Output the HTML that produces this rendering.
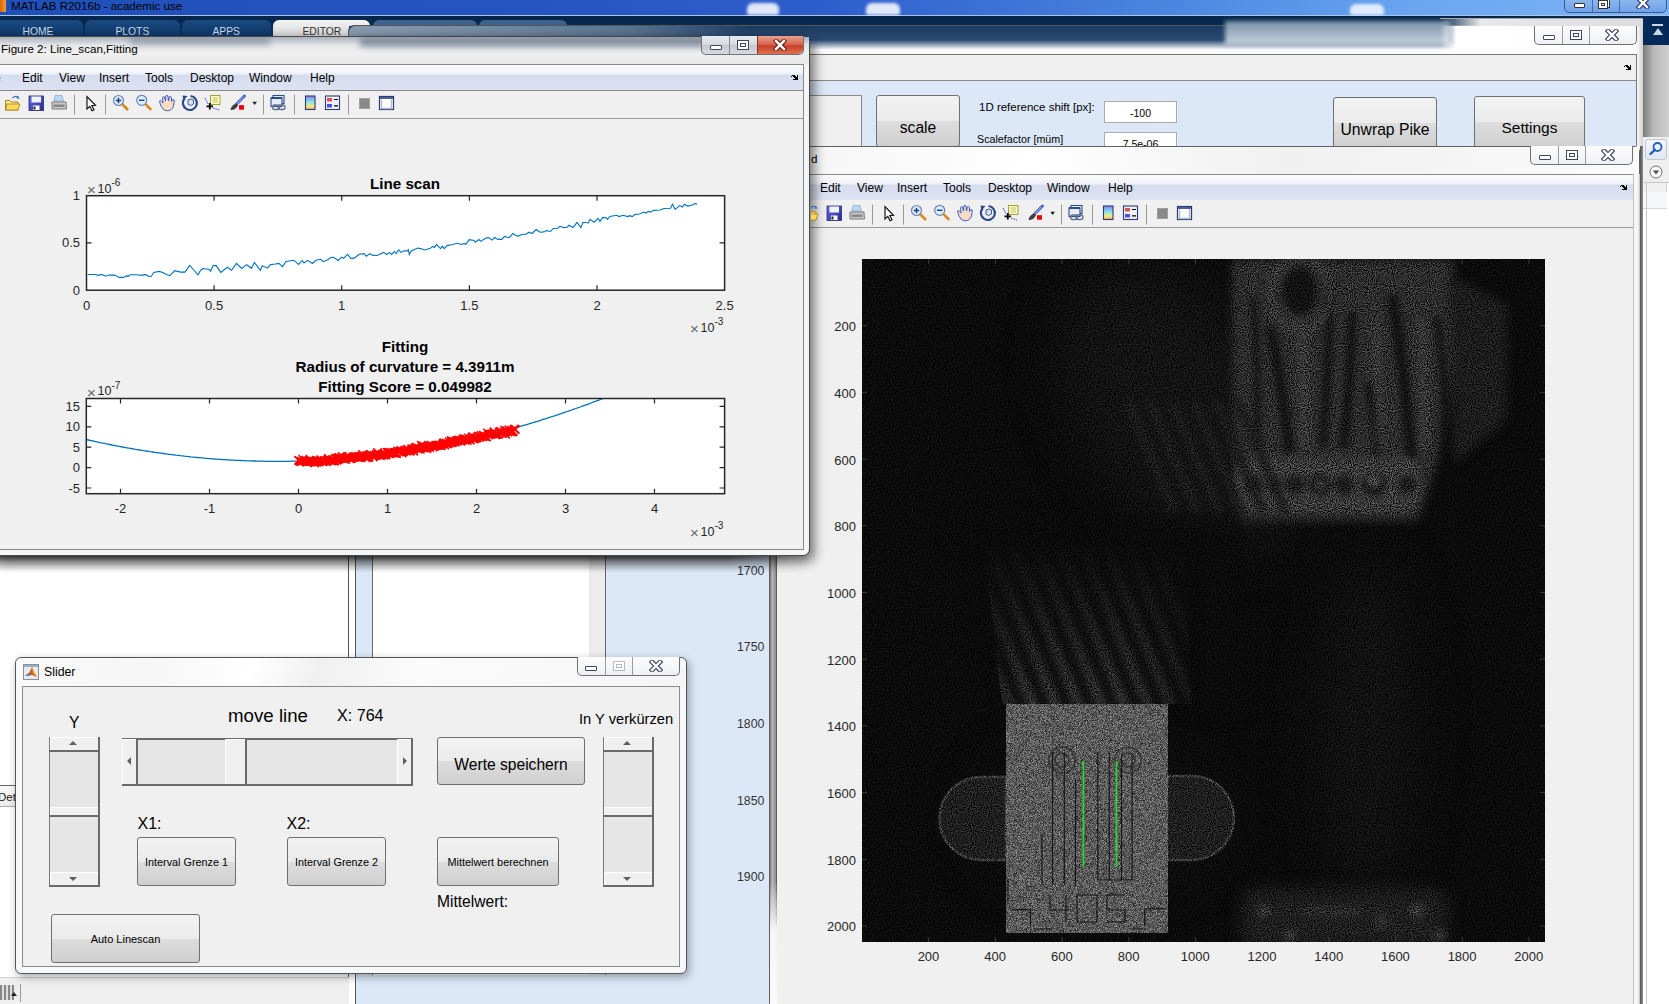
<!DOCTYPE html>
<html><head><meta charset="utf-8"><style>
*{margin:0;padding:0;box-sizing:border-box}
html,body{width:1669px;height:1004px;overflow:hidden;background:#f0f0f0;font-family:"Liberation Sans",sans-serif;color:#000}
.a{position:absolute}
.t{position:absolute;white-space:nowrap;line-height:1}
.btn{position:absolute;border:1px solid #707070;border-radius:3px;background:linear-gradient(#f2f2f2 0%,#ebebeb 50%,#dddddd 51%,#cfcfcf 100%);text-align:center;white-space:nowrap;color:#000}
.ctl{position:absolute;border:1px solid #707070;border-top:none;border-radius:0 0 5px 5px;}
.mb{position:absolute;background:linear-gradient(#fbfcfe 0%,#eef1f8 36%,#d6ddef 40%,#dce2f2 100%);border-top:1px solid #888;border-bottom:1px solid #888}
.mi{position:absolute;top:7px;font-size:12px;white-space:nowrap;line-height:1}
.tb{position:absolute;background:#f0f0f0;border-bottom:1px solid #999}
.tk{position:absolute;font-size:13px;color:#262626;white-space:nowrap;line-height:1}
.sl{position:absolute;background:#e6e6e6}
.ar{position:absolute;background:#f0f0f0;border-top:1px solid #fff;border-left:1px solid #fff}

</style></head><body>
<!-- MATLAB main title bar -->
<div class="a" style="left:0;top:0;width:1669px;height:16px;background:linear-gradient(90deg,#1f4fb8 0%,#2554c0 30%,#2f5fcc 50%,#4a86e0 70%,#6aa6f0 85%,#7db4f5 100%)"></div>
<div class="a" style="left:0;top:15px;width:1669px;height:1px;background:#a9c4ea"></div>
<div class="a" style="left:747px;top:3px;width:32px;height:12px;border-radius:6px 6px 2px 2px;background:rgba(255,255,255,.85);filter:blur(1.5px)"></div>
<div class="a" style="left:866px;top:3px;width:34px;height:12px;border-radius:6px 6px 2px 2px;background:rgba(255,255,255,.85);filter:blur(1.5px)"></div>
<div class="a" style="left:1350px;top:4px;width:34px;height:11px;border-radius:6px 6px 2px 2px;background:rgba(255,255,255,.8);filter:blur(1.5px)"></div>
<div class="t" style="left:11px;top:0px;font-size:11.6px;color:#000">MATLAB R2016b - academic use</div>
<div class="a" style="left:0;top:0;width:6px;height:12px;background:linear-gradient(90deg,#e06010,#f0a030)"></div>
<!-- main window controls -->
<div class="a" style="left:1564px;top:-2px;width:103px;height:15px;border:1px solid #3a5a90;border-radius:0 0 5px 5px;background:linear-gradient(#8cb8f0,#70a0e8)"></div>
<div class="a" style="left:1592px;top:0;width:1px;height:12px;background:#4a6aa0"></div>
<div class="a" style="left:1619px;top:0;width:1px;height:12px;background:#4a6aa0"></div>
<div class="a" style="left:1574px;top:3px;width:11px;height:5px;background:#fff;border:1px solid #333;border-radius:1px"></div>
<div class="a" style="left:1600px;top:-2px;width:10px;height:10px;background:#fff;border:1px solid #333"></div><div class="a" style="left:1598px;top:0px;width:10px;height:9px;background:#fff;border:1px solid #333"><div class="a" style="left:2px;top:2px;width:4px;height:3px;border:1px solid #333"></div></div>
<svg class="a" style="left:1636px;top:-3px" width="14" height="12" viewBox="0 0 14 12"><path d="M3 2 L11 10 M11 2 L3 10" stroke="#2a3a60" stroke-width="4.6" stroke-linecap="square" fill="none"/><path d="M3 2 L11 10 M11 2 L3 10" stroke="#fff" stroke-width="2.4" stroke-linecap="square" fill="none"/></svg>
<!-- toolstrip tabs -->
<div class="a" style="left:0;top:16px;width:1669px;height:20px;background:linear-gradient(#062447,#0a3263)"></div>
<div class="a" style="left:1643px;top:16px;width:26px;height:29px;background:#042a5a"></div>
<div class="a" style="left:0;top:20px;width:83px;height:16px;background:linear-gradient(#1a4a80,#0e3868);border-radius:0 6px 0 0"></div>
<div class="a" style="left:85px;top:20px;width:95px;height:16px;background:linear-gradient(#1a4a80,#0e3868);border-radius:6px 6px 0 0"></div>
<div class="a" style="left:182px;top:20px;width:89px;height:16px;background:linear-gradient(#1a4a80,#0e3868);border-radius:6px 6px 0 0"></div>
<div class="a" style="left:273px;top:20px;width:97px;height:16px;background:linear-gradient(#f4f4f4,#d8d8d8);border-radius:6px 6px 0 0"></div>
<div class="a" style="left:373px;top:20px;width:104px;height:16px;background:#3e6290;border-radius:6px 6px 0 0"></div>
<div class="a" style="left:479px;top:20px;width:88px;height:16px;background:#3e6290;border-radius:6px 6px 0 0"></div>
<div class="t" style="left:22.5px;top:27px;font-size:10.3px;color:#d0dcea">HOME</div>
<div class="t" style="left:115.5px;top:27px;font-size:10.3px;color:#d0dcea">PLOTS</div>
<div class="t" style="left:212.5px;top:27px;font-size:10.3px;color:#d0dcea">APPS</div>
<div class="t" style="left:302.5px;top:27px;font-size:10.3px;color:#333">EDITOR</div>
<!-- right side collapse icon -->
<div class="a" style="left:1652px;top:24px;width:11px;height:2px;background:#c8d8e8"></div>
<div class="a" style="left:1653px;top:28px;width:0;height:0;border-left:5px solid transparent;border-right:5px solid transparent;border-bottom:7px solid #c8d8e8"></div>
<!-- right panel -->
<div class="a" style="left:1643px;top:45px;width:26px;height:959px;background:#f0f0f0"></div>
<div class="a" style="left:1643px;top:45px;width:26px;height:92px;background:linear-gradient(90deg,#7a7a7a,#b8b8b8 40%,#d0d0d0)"></div>
<div class="a" style="left:1645px;top:139px;width:22px;height:21px;border:1px solid #c0c8d4;border-radius:3px;background:linear-gradient(#f4f6fa,#e2e8f0)"></div>
<svg class="a" style="left:1648px;top:141px" width="16" height="16" viewBox="0 0 16 16"><circle cx="9.5" cy="6" r="4" fill="#e8f4ff" stroke="#2060c0" stroke-width="1.8"/><path d="M6.8 8.8 L2.5 13" stroke="#2060c0" stroke-width="2.4" stroke-linecap="round"/></svg>
<svg class="a" style="left:1649px;top:165px" width="14" height="14" viewBox="0 0 14 14"><circle cx="7" cy="7" r="6" fill="#f8f8f8" stroke="#707070" stroke-width="1"/><path d="M3.8 5.5 H10.2 L7 9.5Z" fill="#505050"/></svg>
<div class="a" style="left:1643px;top:182px;width:26px;height:1px;background:#c8c8c8"></div>
<div class="a" style="left:1643px;top:183px;width:26px;height:821px;background:#fff"></div>
<div class="a" style="left:1643px;top:183px;width:24px;height:26px;background:#f0f0f0;border-right:1px solid #d0d0d0;border-bottom:1px solid #d8d8d8"></div>
<div class="a" style="left:1643px;top:192px;width:24px;height:16px;background:#f4f6fa"></div>
<div class="a" style="left:1646px;top:183px;width:1px;height:821px;background:#c8c8c8"></div>
<!-- MATLAB editor area background -->
<div class="a" style="left:0;top:556px;width:771px;height:448px;background:#dce8f8"></div><div class="a" style="left:0;top:556px;width:349px;height:448px;background:#fff"></div><div class="a" style="left:349px;top:556px;width:7px;height:448px;background:#fff"></div><div class="a" style="left:373px;top:556px;width:216px;height:419px;background:#fff"></div>
<div class="a" style="left:348px;top:556px;width:1px;height:421px;background:#555"></div>
<div class="a" style="left:355px;top:556px;width:1px;height:448px;background:#555"></div>

<div class="a" style="left:372px;top:556px;width:1px;height:419px;background:#666"></div>
<div class="a" style="left:589px;top:556px;width:16px;height:419px;background:#ececec"></div>
<div class="a" style="left:605px;top:556px;width:1px;height:419px;background:#666"></div>
<div class="a" style="left:606px;top:556px;width:163px;height:448px;background:#dce8f8"></div>
<div class="t" style="left:737px;top:565px;font-size:12.3px;color:#333">1700</div>
<div class="t" style="left:737px;top:641px;font-size:12.3px;color:#333">1750</div>
<div class="t" style="left:737px;top:718px;font-size:12.3px;color:#333">1800</div>
<div class="t" style="left:737px;top:795px;font-size:12.3px;color:#333">1850</div>
<div class="t" style="left:737px;top:871px;font-size:12.3px;color:#333">1900</div>
<!-- status bar bottom-left -->
<div class="a" style="left:0;top:977px;width:349px;height:27px;background:#efefef;border-top:1px solid #d0d0d0"></div>
<div class="a" style="left:20px;top:984px;width:1px;height:18px;background:#999"></div>

<div class="a" style="left:0;top:785px;width:16px;height:22px;background:linear-gradient(#fafafa,#ececec);border-top:1px solid #666;border-bottom:1px solid #aaa;border-right:1px solid #666"></div><div class="t" style="left:-2px;top:792px;font-size:11.5px;color:#222">Det</div>
<div class="a" style="left:0;top:985px;width:14px;height:15px;background:repeating-linear-gradient(90deg,#888 0 2px,#ddd 2px 4px)"></div><div class="a" style="left:11px;top:992px;width:0;height:0;border-left:3px solid transparent;border-right:3px solid transparent;border-bottom:4px solid #222"></div>
<!-- GUI window top-right -->
<div class="a" style="left:348px;top:25px;width:1295px;height:121px;background:#f6f6f6;border:1px solid #555;border-radius:6px 6px 0 0"></div>
<div class="a" style="left:349px;top:26px;width:1293px;height:28px;background:linear-gradient(#1e3a60 0%,#2a4a74 50%,#ffffff 85%,#fafafa)"></div><div class="a" style="left:349px;top:26px;width:400px;height:10px;border-radius:6px 0 0 0;background:linear-gradient(90deg,#8a9cb0 0%,#7088a0 40%,#5a7490 70%,rgba(30,58,96,0) 100%)"></div><div class="a" style="left:1225px;top:21px;width:225px;height:24px;background:linear-gradient(#7890a8,#a8b8c8 60%,#c8d4e0);filter:blur(2px)"></div><div class="a" style="left:1440px;top:26px;width:202px;height:28px;background:linear-gradient(90deg,rgba(255,255,255,0),#fff 8%,#fdfdfd)"></div><div class="a" style="left:1440px;top:18px;width:203px;height:8px;background:linear-gradient(90deg,rgba(230,230,230,0),#e8e8e8 20%,#dcdcdc);border-top:1px solid #aaa"></div>
<div class="a" style="left:810px;top:54px;width:826px;height:27px;background:#efefef;border-top:1px solid #777;border-bottom:1px solid #888"></div>
<div class="a" style="left:810px;top:81px;width:826px;height:65px;background:#dce8f8"></div>
<div class="a" style="left:1636px;top:54px;width:1px;height:92px;background:#777"></div>
<div class="a" style="left:1637px;top:26px;width:6px;height:120px;background:linear-gradient(90deg,#f8f8f8,#d0d0d0)"></div>
<!-- dock arrow -->
<svg class="a" style="left:1624px;top:65px" width="7" height="5" viewBox="0 0 7 5" shape-rendering="crispEdges"><path d="M1 0h1v1h-1zM2 0h1v1h-1zM3 0h1v1h-1zM6 0h1v1h-1zM0 1h1v1h-1zM2 1h1v1h-1zM3 1h1v1h-1zM4 1h1v1h-1zM6 1h1v1h-1zM3 2h1v1h-1zM4 2h1v1h-1zM5 2h1v1h-1zM6 2h1v1h-1zM4 3h1v1h-1zM5 3h1v1h-1zM6 3h1v1h-1zM2 4h1v1h-1zM3 4h1v1h-1zM4 4h1v1h-1zM5 4h1v1h-1zM6 4h1v1h-1z" fill="#000"/></svg>
<!-- GUI controls -->
<div class="ctl" style="left:1534px;top:26px;width:103px;height:19px;background:linear-gradient(#fdfdfd,#eef0f4)"></div>
<div class="a" style="left:1562px;top:26px;width:1px;height:18px;background:#9a9a9a"></div>
<div class="a" style="left:1589px;top:26px;width:1px;height:18px;background:#9a9a9a"></div>
<div class="a" style="left:1543px;top:35px;width:12px;height:5px;border:1px solid #3c4660;border-radius:1px;background:#fff"></div>
<div class="a" style="left:1570px;top:30px;width:12px;height:10px;border:1px solid #3c4660;background:#fff"><div class="a" style="left:2px;top:2px;width:6px;height:4px;border:1px solid #3c4660"></div></div>
<svg class="a" style="left:1605px;top:29px" width="14" height="12" viewBox="0 0 14 12"><path d="M3 2 L11 10 M11 2 L3 10" stroke="#3c4660" stroke-width="4.6" stroke-linecap="square" fill="none"/><path d="M3 2 L11 10 M11 2 L3 10" stroke="#fff" stroke-width="2.4" stroke-linecap="square" fill="none"/></svg>
<!-- left partial button -->
<div class="a" style="left:800px;top:95px;width:62px;height:52px;border:1px solid #8a8a8a;background:#efefef"></div>
<div class="btn" style="left:876px;top:95px;width:84px;height:52px;font-size:15.6px;line-height:1;padding-top:24px">scale</div>
<div class="t" style="left:979px;top:101.5px;font-size:11.5px;color:#000">1D reference shift [px]:</div>
<div class="a" style="left:1104px;top:101px;width:73px;height:22px;background:#fff;border:1px solid #ababab;font-size:10.5px;text-align:center;line-height:1;padding-top:6px">-100</div>
<div class="t" style="left:977px;top:134px;font-size:10.7px;color:#000">Scalefactor [müm]</div>
<div class="a" style="left:1104px;top:132px;width:73px;height:22px;background:#fff;border:1px solid #ababab;font-size:10.5px;text-align:center;line-height:1;padding-top:6px">7.5e-06</div>
<div class="btn" style="left:1333px;top:97px;width:104px;height:52px;font-size:15.7px;line-height:1;padding-top:24px">Unwrap Pike</div>
<div class="btn" style="left:1474px;top:96px;width:111px;height:52px;font-size:15.5px;line-height:1;padding-top:23px">Settings</div>

<!-- Figure 1 window -->
<div class="a" style="left:769px;top:146px;width:871px;height:858px;background:#f6f7f9;border:1px solid #606060;border-radius:6px 6px 0 0"></div>
<div class="a" style="left:770px;top:147px;width:869px;height:27px;background:linear-gradient(90deg,#f4f4f4,#ffffff 30%,#f0f0f0 60%,#fbfbfb)"></div>
<div class="a" style="left:770px;top:174px;width:7px;height:830px;background:linear-gradient(90deg,#707070,#b8b8b8 30%,#909090 80%,#404040)"></div><div class="a" style="left:770px;top:880px;width:7px;height:124px;background:linear-gradient(rgba(250,250,250,0),rgba(250,250,250,.95) 40%,#fafafa)"></div>
<div class="a" style="left:1633px;top:174px;width:7px;height:830px;background:linear-gradient(90deg,#a0a0a0,#f8f8f8 20%,#f4f4f4 70%,#c0c0c0)"></div><div class="a" style="left:1640px;top:146px;width:3px;height:858px;background:linear-gradient(90deg,#505050,#909090)"></div>
<div class="t" style="left:811px;top:153px;font-size:11.6px">d</div>
<div class="ctl" style="left:1530px;top:146px;width:103px;height:19px;background:linear-gradient(#fdfdfd,#eef0f4)"></div>
<div class="a" style="left:1558px;top:146px;width:1px;height:18px;background:#9a9a9a"></div>
<div class="a" style="left:1585px;top:146px;width:1px;height:18px;background:#9a9a9a"></div>
<div class="a" style="left:1539px;top:155px;width:12px;height:5px;border:1px solid #3c4660;border-radius:1px;background:#fff"></div>
<div class="a" style="left:1566px;top:150px;width:12px;height:10px;border:1px solid #3c4660;background:#fff"><div class="a" style="left:2px;top:2px;width:6px;height:4px;border:1px solid #3c4660"></div></div>
<svg class="a" style="left:1601px;top:149px" width="14" height="12" viewBox="0 0 14 12"><path d="M3 2 L11 10 M11 2 L3 10" stroke="#3c4660" stroke-width="4.6" stroke-linecap="square" fill="none"/><path d="M3 2 L11 10 M11 2 L3 10" stroke="#fff" stroke-width="2.4" stroke-linecap="square" fill="none"/></svg>
<div class="mb" style="left:777px;top:174px;width:856px;height:27px"></div>
<div class="mi" style="left:820px;top:182px">Edit</div>
<div class="mi" style="left:857px;top:182px">View</div>
<div class="mi" style="left:897px;top:182px">Insert</div>
<div class="mi" style="left:943px;top:182px">Tools</div>
<div class="mi" style="left:988px;top:182px">Desktop</div>
<div class="mi" style="left:1047px;top:182px">Window</div>
<div class="mi" style="left:1108px;top:182px">Help</div>
<svg class="a" style="left:1620px;top:185px" width="7" height="5" viewBox="0 0 7 5" shape-rendering="crispEdges"><path d="M1 0h1v1h-1zM2 0h1v1h-1zM3 0h1v1h-1zM6 0h1v1h-1zM0 1h1v1h-1zM2 1h1v1h-1zM3 1h1v1h-1zM4 1h1v1h-1zM6 1h1v1h-1zM3 2h1v1h-1zM4 2h1v1h-1zM5 2h1v1h-1zM6 2h1v1h-1zM4 3h1v1h-1zM5 3h1v1h-1zM6 3h1v1h-1zM2 4h1v1h-1zM3 4h1v1h-1zM4 4h1v1h-1zM5 4h1v1h-1zM6 4h1v1h-1z" fill="#000"/></svg>
<div class="tb" style="left:777px;top:200px;width:856px;height:28px"></div>
<div class="a" style="left:777px;top:228px;width:856px;height:776px;background:#f0f0f0"></div>
<!-- image -->
<svg class="a" style="left:862px;top:259px" width="683" height="683" viewBox="0 0 683 683">
<defs>
<filter id="spk" color-interpolation-filters="sRGB" filterUnits="userSpaceOnUse" x="0" y="0" width="683" height="683"><feTurbulence type="fractalNoise" baseFrequency="0.95" numOctaves="1" seed="5" result="n"/><feColorMatrix in="n" values="3.2 0 0 0 -1.1  3.2 0 0 0 -1.1  3.2 0 0 0 -1.1  0 0 0 0 1" result="g"/><feComposite in="SourceGraphic" in2="g" operator="arithmetic" k1="1.75" k2="0.12" k3="0" k4="0"/></filter>
<filter id="spk2" color-interpolation-filters="sRGB" filterUnits="userSpaceOnUse" x="0" y="0" width="683" height="683"><feTurbulence type="fractalNoise" baseFrequency="1.3" numOctaves="1" seed="8" result="n"/><feColorMatrix in="n" values="2.4 0 0 0 -0.7  2.4 0 0 0 -0.7  2.4 0 0 0 -0.7  0 0 0 0 1" result="g"/><feComposite in="SourceGraphic" in2="g" operator="arithmetic" k1="1.3" k2="0.35" k3="0" k4="0"/></filter>
<filter id="b3" color-interpolation-filters="sRGB" filterUnits="userSpaceOnUse" x="0" y="0" width="683" height="683"><feGaussianBlur stdDeviation="3"/></filter>
<filter id="b5" color-interpolation-filters="sRGB" filterUnits="userSpaceOnUse" x="0" y="0" width="683" height="683"><feGaussianBlur stdDeviation="5"/></filter>
<filter id="b8" color-interpolation-filters="sRGB" filterUnits="userSpaceOnUse" x="0" y="0" width="683" height="683"><feGaussianBlur stdDeviation="8"/></filter>
<filter id="b25" color-interpolation-filters="sRGB" filterUnits="userSpaceOnUse" x="0" y="0" width="683" height="683"><feGaussianBlur stdDeviation="25"/></filter>
<clipPath id="imc"><rect width="683" height="683"/></clipPath>
<linearGradient id="frg" x1="0" y1="0" x2="0" y2="1"><stop offset="0" stop-color="#0b0b0b" stop-opacity="1"/><stop offset="0.45" stop-color="#0b0b0b" stop-opacity="0.55"/><stop offset="1" stop-color="#0b0b0b" stop-opacity="0"/></linearGradient>
<linearGradient id="frg2" x1="0" y1="0" x2="1" y2="0"><stop offset="0" stop-color="#0b0b0b" stop-opacity="0.6"/><stop offset="0.25" stop-color="#0b0b0b" stop-opacity="0"/><stop offset="0.7" stop-color="#0b0b0b" stop-opacity="0"/><stop offset="1" stop-color="#0b0b0b" stop-opacity="0.7"/></linearGradient>
<clipPath id="frc"><path d="M122 287 L322 287 L330 445 L140 445Z"/></clipPath>
<clipPath id="trc"><path d="M368 0 L596 0 L592 121 L580 195 L560 258 L376 258 L370 195Z"/></clipPath>
</defs>
<g clip-path="url(#imc)">
<g filter="url(#spk)">
<rect width="683" height="683" fill="#0b0b0b"/>
<g filter="url(#b25)"><ellipse cx="320" cy="150" rx="100" ry="160" fill="#131313" transform="rotate(-35 320 150)"/><ellipse cx="505" cy="470" rx="45" ry="170" fill="#121212"/><ellipse cx="240" cy="560" rx="120" ry="70" fill="#0f0f0f"/></g>
<g filter="url(#b5)"><path d="M370 0 L592 0 L588 121 L576 200 L556 262 L380 262 L372 200Z" fill="#2c2c2c"/><path d="M585 15 L645 45 L645 160 L592 205Z" fill="#1c1c1c"/></g>
<g clip-path="url(#trc)"><g filter="url(#b3)"><path d="M409 72 Q421 131 427 190" stroke="#121212" stroke-width="10" fill="none" stroke-linecap="round"/><path d="M467 30 Q467 108 461 185" stroke="#121212" stroke-width="8" fill="none" stroke-linecap="round"/><path d="M490 57 Q489 121 482 185" stroke="#121212" stroke-width="9" fill="none" stroke-linecap="round"/><path d="M531 41 Q543 118 549 195" stroke="#121212" stroke-width="11" fill="none" stroke-linecap="round"/><path d="M506 127 Q514 161 515 195" stroke="#121212" stroke-width="7" fill="none" stroke-linecap="round"/><path d="M392 40 Q396 110 395 180" stroke="#121212" stroke-width="6" fill="none" stroke-linecap="round"/><path d="M575 60 Q583 115 585 170" stroke="#121212" stroke-width="7" fill="none" stroke-linecap="round"/><path d="M440 60 L443 190" stroke="#444" stroke-width="10" fill="none" opacity="0.5"/><path d="M515 60 L518 190" stroke="#444" stroke-width="8" fill="none" opacity="0.5"/><path d="M560 60 L563 190" stroke="#444" stroke-width="8" fill="none" opacity="0.5"/></g></g>
<g filter="url(#b3)"><ellipse cx="438" cy="35" rx="30" ry="36" fill="none" stroke="#363636" stroke-width="7"/><ellipse cx="438" cy="32" rx="17" ry="24" fill="#121212"/></g>
<g filter="url(#b3)"><rect x="372" y="198" width="188" height="54" rx="20" fill="#383838"/><circle cx="392" cy="226" r="9" fill="#1a1a1a"/><circle cx="412" cy="226" r="7" fill="#1a1a1a"/><circle cx="433" cy="226" r="10" fill="#1a1a1a"/><circle cx="458" cy="226" r="11" fill="#1a1a1a"/><circle cx="482" cy="226" r="10" fill="#1a1a1a"/><circle cx="512" cy="226" r="12" fill="#1a1a1a"/><circle cx="545" cy="226" r="9" fill="#1a1a1a"/></g>
<g filter="url(#b3)"><circle cx="458" cy="226" r="3" fill="#777"/><circle cx="512" cy="222" r="5" fill="#666"/></g>
<g filter="url(#b3)"><path d="M267 145 L312 250" stroke="#1c1c1c" stroke-width="9" stroke-linecap="round"/><path d="M289 145 L334 250" stroke="#1c1c1c" stroke-width="9" stroke-linecap="round"/><path d="M311 145 L356 250" stroke="#1c1c1c" stroke-width="9" stroke-linecap="round"/><path d="M333 145 L378 250" stroke="#1c1c1c" stroke-width="9" stroke-linecap="round"/><path d="M355 145 L400 250" stroke="#1c1c1c" stroke-width="9" stroke-linecap="round"/><path d="M377 145 L422 250" stroke="#1c1c1c" stroke-width="9" stroke-linecap="round"/></g>
<g clip-path="url(#frc)"><g filter="url(#b3)"><rect x="100" y="270" width="260" height="190" fill="#0f0f0f"/><path d="M26 262 L104 452" stroke="#303030" stroke-width="10"/><path d="M49 262 L127 452" stroke="#303030" stroke-width="10"/><path d="M72 262 L150 452" stroke="#303030" stroke-width="10"/><path d="M95 262 L173 452" stroke="#303030" stroke-width="10"/><path d="M118 262 L196 452" stroke="#303030" stroke-width="10"/><path d="M141 262 L219 452" stroke="#303030" stroke-width="10"/><path d="M164 262 L242 452" stroke="#303030" stroke-width="10"/><path d="M187 262 L265 452" stroke="#303030" stroke-width="10"/><path d="M210 262 L288 452" stroke="#303030" stroke-width="10"/><path d="M233 262 L311 452" stroke="#303030" stroke-width="10"/><path d="M256 262 L334 452" stroke="#303030" stroke-width="10"/><path d="M279 262 L357 452" stroke="#303030" stroke-width="10"/><path d="M302 262 L380 452" stroke="#303030" stroke-width="10"/><path d="M325 262 L403 452" stroke="#303030" stroke-width="10"/><path d="M348 262 L426 452" stroke="#303030" stroke-width="10"/></g></g>
<rect x="100" y="280" width="240" height="170" fill="url(#frg)"/><rect x="100" y="280" width="240" height="170" fill="url(#frg2)"/>
<g filter="url(#b8)"><rect x="90" y="262" width="270" height="22" fill="#0b0b0b"/><rect x="330" y="270" width="50" height="185" fill="#0b0b0b"/></g>
<path d="M144 518 L119 518 A41.5 41.5 0 0 0 119 601 L144 601Z" fill="#1e1e1e" stroke="#3a3a3a" stroke-width="2.5"/>
<path d="M305 517 L330 517 A42 42 0 0 1 330 601 L305 601Z" fill="#1e1e1e" stroke="#3a3a3a" stroke-width="2.5"/>
<g filter="url(#b8)"><rect x="380" y="630" width="205" height="60" rx="12" fill="#1e1e1e"/></g>
<g filter="url(#b3)"><circle cx="402" cy="652" r="6" fill="#383838"/><circle cx="428" cy="677" r="6" fill="#383838"/><circle cx="555" cy="652" r="7" fill="#383838"/><circle cx="520" cy="662" r="8" fill="#2e2e2e"/><circle cx="578" cy="677" r="6" fill="#383838"/><rect x="440" y="648" width="60" height="10" fill="#2a2a2a"/></g>
</g>
<rect x="144" y="445" width="162" height="229" fill="#5a5a5a" filter="url(#spk2)"/>
<path d="M180 575V626 M190.6 493V626 M202.3 493V626 M213.5 520V626 M235.8 493V621 M247.3 493V621 M259.5 495V621 M270.1 495V621 M235.8 621H270.1 M188 636 V651 H207 M204 636 V663 M215 636 H235 V663 H215Z M263 636 H245 V651 H263 V663 H245 M150.6 650.6 H168.4 V668.1 M282.7 649.8 H304.7 M282.7 649.8 V667.6 M146 621 V643 M172 670 H190 M270 670 H284" stroke="#080808" stroke-width="1.1" fill="none" opacity="0.85"/>
<g fill="none" stroke="#222" stroke-width="1.4" opacity="0.7"><circle cx="200" cy="501" r="13"/><circle cx="266" cy="501" r="13"/><circle cx="200" cy="501" r="7"/><circle cx="266" cy="501" r="7"/></g>
<path d="M221.4 502 V608 M254.4 502 V608" stroke="#1ee01e" stroke-width="1.6"/>
<path d="M66.7 683V678M66.7 0V5M0 66.7H5M683 66.7H678M133.4 683V678M133.4 0V5M0 133.4H5M683 133.4H678M200.1 683V678M200.1 0V5M0 200.1H5M683 200.1H678M266.8 683V678M266.8 0V5M0 266.8H5M683 266.8H678M333.5 683V678M333.5 0V5M0 333.5H5M683 333.5H678M400.2 683V678M400.2 0V5M0 400.2H5M683 400.2H678M466.9 683V678M466.9 0V5M0 466.9H5M683 466.9H678M533.6 683V678M533.6 0V5M0 533.6H5M683 533.6H678M600.3 683V678M600.3 0V5M0 600.3H5M683 600.3H678M667.0 683V678M667.0 0V5M0 667.0H5M683 667.0H678" stroke="#3a3a3a" stroke-width="1"/>
</g></svg>
<!-- /image -->
<div class="tk" style="left:776px;top:320.1px;width:80px;text-align:right;font-size:13px">200</div>
<div class="tk" style="left:888.5px;top:949.6px;width:80px;text-align:center;font-size:13px">200</div>
<div class="tk" style="left:776px;top:386.8px;width:80px;text-align:right;font-size:13px">400</div>
<div class="tk" style="left:955.2px;top:949.6px;width:80px;text-align:center;font-size:13px">400</div>
<div class="tk" style="left:776px;top:453.5px;width:80px;text-align:right;font-size:13px">600</div>
<div class="tk" style="left:1021.9px;top:949.6px;width:80px;text-align:center;font-size:13px">600</div>
<div class="tk" style="left:776px;top:520.2px;width:80px;text-align:right;font-size:13px">800</div>
<div class="tk" style="left:1088.6px;top:949.6px;width:80px;text-align:center;font-size:13px">800</div>
<div class="tk" style="left:776px;top:586.9px;width:80px;text-align:right;font-size:13px">1000</div>
<div class="tk" style="left:1155.3px;top:949.6px;width:80px;text-align:center;font-size:13px">1000</div>
<div class="tk" style="left:776px;top:653.6px;width:80px;text-align:right;font-size:13px">1200</div>
<div class="tk" style="left:1222.0px;top:949.6px;width:80px;text-align:center;font-size:13px">1200</div>
<div class="tk" style="left:776px;top:720.3px;width:80px;text-align:right;font-size:13px">1400</div>
<div class="tk" style="left:1288.7px;top:949.6px;width:80px;text-align:center;font-size:13px">1400</div>
<div class="tk" style="left:776px;top:787.0px;width:80px;text-align:right;font-size:13px">1600</div>
<div class="tk" style="left:1355.4px;top:949.6px;width:80px;text-align:center;font-size:13px">1600</div>
<div class="tk" style="left:776px;top:853.7px;width:80px;text-align:right;font-size:13px">1800</div>
<div class="tk" style="left:1422.1px;top:949.6px;width:80px;text-align:center;font-size:13px">1800</div>
<div class="tk" style="left:776px;top:920.4px;width:80px;text-align:right;font-size:13px">2000</div>
<div class="tk" style="left:1488.8px;top:949.6px;width:80px;text-align:center;font-size:13px">2000</div>

<!-- Figure 2 window -->
<div class="a" style="left:0;top:556px;width:808px;height:16px;background:linear-gradient(rgba(0,0,0,.6),rgba(0,0,0,.25) 35%,rgba(0,0,0,0));-webkit-mask-image:linear-gradient(90deg,#000 90%,transparent)"></div>
<div class="a" style="left:-8px;top:36px;width:818px;height:520px;background:#f4f5f7;border:1px solid #4a4a4a;border-radius:7px;box-shadow:3px 5px 12px 1px rgba(0,0,0,.55)"></div>
<div class="a" style="left:0;top:37px;width:809px;height:27px;background:linear-gradient(#a8b0ba 0%,#e4e6e9 30%,#f0f0f0 60%,#e8e8e8 100%)"></div>
<div class="a" style="left:130px;top:38px;width:140px;height:7px;background:rgba(40,60,90,.35);filter:blur(3px)"></div>
<div class="a" style="left:360px;top:38px;width:440px;height:9px;background:rgba(30,50,80,.45);filter:blur(3px)"></div>
<div class="t" style="left:1px;top:43px;font-size:11.6px">Figure 2: Line_scan,Fitting</div>
<div class="ctl" style="left:701px;top:36px;width:103px;height:19px;background:linear-gradient(#e8ebef 0%,#d4d8de 50%,#c4c8ce 51%,#d8dce2 100%)"></div>
<div class="a" style="left:757px;top:36px;width:46px;height:18px;border-radius:0 0 5px 0;background:linear-gradient(#e8a090 0%,#d86850 45%,#c8402a 55%,#e07050 100%);border-left:1px solid #8a3020"></div>
<div class="a" style="left:729px;top:36px;width:1px;height:18px;background:#8a8a8a"></div>
<div class="a" style="left:710px;top:45px;width:12px;height:5px;border:1px solid #3c4660;border-radius:1px;background:#fff"></div>
<div class="a" style="left:737px;top:40px;width:12px;height:10px;border:1px solid #3c4660;background:#fff"><div class="a" style="left:2px;top:2px;width:6px;height:4px;border:1px solid #3c4660"></div></div>
<svg class="a" style="left:773px;top:39px" width="14" height="12" viewBox="0 0 14 12"><path d="M3 2 L11 10 M11 2 L3 10" stroke="#6a2a20" stroke-width="4.6" stroke-linecap="square" fill="none"/><path d="M3 2 L11 10 M11 2 L3 10" stroke="#fff" stroke-width="2.4" stroke-linecap="square" fill="none"/></svg>
<div class="mb" style="left:0;top:64px;width:804px;height:27px;border-right:1px solid #888"></div>
<div class="mi" style="left:-6px;top:71.6px">e</div>
<div class="mi" style="left:22px;top:71.6px">Edit</div>
<div class="mi" style="left:59px;top:71.6px">View</div>
<div class="mi" style="left:99px;top:71.6px">Insert</div>
<div class="mi" style="left:145px;top:71.6px">Tools</div>
<div class="mi" style="left:190px;top:71.6px">Desktop</div>
<div class="mi" style="left:249px;top:71.6px">Window</div>
<div class="mi" style="left:310px;top:71.6px">Help</div>
<svg class="a" style="left:791px;top:75px" width="7" height="5" viewBox="0 0 7 5" shape-rendering="crispEdges"><path d="M1 0h1v1h-1zM2 0h1v1h-1zM3 0h1v1h-1zM6 0h1v1h-1zM0 1h1v1h-1zM2 1h1v1h-1zM3 1h1v1h-1zM4 1h1v1h-1zM6 1h1v1h-1zM3 2h1v1h-1zM4 2h1v1h-1zM5 2h1v1h-1zM6 2h1v1h-1zM4 3h1v1h-1zM5 3h1v1h-1zM6 3h1v1h-1zM2 4h1v1h-1zM3 4h1v1h-1zM4 4h1v1h-1zM5 4h1v1h-1zM6 4h1v1h-1z" fill="#000"/></svg>
<div class="tb" style="left:0;top:91px;width:804px;height:28px;border-right:1px solid #888"></div>
<div class="a" style="left:0;top:119px;width:804px;height:431px;background:#f0f0f0;border-right:1px solid #888;border-bottom:1px solid #888"></div>

<svg class="a" style="left:0;top:0" width="810" height="556" viewBox="0 0 810 556">
<defs><clipPath id="c1"><rect x="86.5" y="195.7" width="638.1" height="94.5"/></clipPath><clipPath id="c2"><rect x="86.3" y="398.5" width="638.3" height="95.2"/></clipPath></defs>
<rect x="86.5" y="195.7" width="638.1" height="94.5" fill="#fff"/>
<rect x="86.3" y="398.5" width="638.3" height="95.2" fill="#fff"/>
<polyline clip-path="url(#c1)" points="87.8,274.5 95.0,274.5 98.0,275.4 101.6,274.4 105.8,276.2 108.8,275.1 114.8,275.1 119.0,277.4 123.7,277.4 126.7,275.7 127.9,276.5 130.3,274.8 136.3,274.8 141.7,275.4 145.3,274.4 148.9,276.5 151.3,276.2 153.7,272.4 159.1,271.4 162.7,272.4 167.5,275.0 169.9,275.6 174.7,270.6 180.7,272.1 184.9,272.1 189.7,265.4 193.8,270.0 198.0,274.8 200.4,270.6 202.8,268.5 209.4,269.4 210.6,271.4 213.0,265.8 216.0,265.4 220.8,272.4 227.4,267.3 231.6,270.2 236.4,263.4 241.8,268.5 246.6,264.6 251.4,268.3 254.4,262.5 260.4,270.3 262.2,265.8 267.5,268.2 270.5,264.6 275.3,264.0 278.9,263.4 282.5,266.6 286.0,261.5 293.2,260.3 295.0,261.1 298.6,264.4 302.2,260.5 304.0,262.9 307.6,260.3 312.4,263.5 316.0,260.3 320.8,259.3 323.1,261.7 326.7,260.3 331.5,257.2 333.9,257.5 338.1,260.5 341.7,257.2 343.5,258.4 347.7,254.3 350.7,258.4 354.3,258.1 359.1,254.3 363.9,253.6 366.3,256.3 369.9,253.6 372.3,255.1 377.1,255.5 383.7,252.4 386.7,254.5 389.7,252.4 391.5,254.5 394.4,251.5 396.2,253.6 398.6,249.8 401.0,252.4 404.0,250.7 407.6,250.9 408.2,249.8 409.4,254.5 411.2,250.9 417.8,248.0 420.8,248.6 424.4,250.0 429.8,248.6 432.8,246.4 434.6,247.4 436.4,244.4 440.6,248.6 442.4,246.2 444.2,248.6 447.2,245.6 451.4,244.7 457.4,243.2 461.0,244.4 464.6,243.5 465.7,244.4 469.3,239.6 474.1,240.4 475.3,242.3 478.9,239.6 480.7,241.4 486.0,238.1 488.6,237.5 491.9,240.1 494.6,237.5 497.9,239.4 501.8,239.4 504.5,236.4 509.1,237.7 513.0,233.5 515.7,235.5 518.3,236.1 522.3,234.2 526.2,234.2 528.8,232.2 532.1,233.5 536.1,229.5 540.0,232.2 544.0,231.9 546.6,230.6 550.6,231.5 553.2,228.5 557.8,228.2 559.8,226.3 563.8,227.6 567.1,227.2 569.0,225.3 573.0,227.6 577.0,222.3 580.9,227.6 582.9,222.3 588.2,223.0 590.1,219.3 594.1,222.3 598.0,218.3 600.0,221.4 602.7,217.4 606.0,217.7 607.3,219.3 609.9,216.4 616.5,215.3 619.1,216.6 623.1,215.3 627.7,216.6 629.7,215.7 632.3,216.6 635.0,214.4 639.6,214.0 643.5,212.1 646.2,213.1 648.1,211.4 650.8,212.1 653.4,210.4 660.0,210.0 664.0,208.5 670.6,208.2 672.5,204.2 675.2,209.5 679.8,205.6 682.4,207.1 684.4,204.2 687.7,206.1 691.6,205.2 695.6,203.4 696.9,204.5" fill="none" stroke="#0072bd" stroke-width="1.1" stroke-linejoin="miter"/>
<polyline clip-path="url(#c2)" points="86.2,439.5 88.4,440.0 90.5,440.5 92.7,440.9 94.8,441.4 96.9,441.9 99.1,442.3 101.2,442.8 103.3,443.2 105.5,443.7 107.6,444.1 109.8,444.5 111.9,445.0 114.0,445.4 116.2,445.8 118.3,446.2 120.5,446.6 122.6,447.0 124.7,447.4 126.9,447.8 129.0,448.2 131.1,448.5 133.3,448.9 135.4,449.3 137.6,449.6 139.7,450.0 141.8,450.3 144.0,450.7 146.1,451.0 148.3,451.3 150.4,451.7 152.5,452.0 154.7,452.3 156.8,452.6 159.0,452.9 161.1,453.2 163.2,453.5 165.4,453.8 167.5,454.1 169.6,454.4 171.8,454.6 173.9,454.9 176.1,455.2 178.2,455.4 180.3,455.7 182.5,455.9 184.6,456.2 186.8,456.4 188.9,456.6 191.0,456.9 193.2,457.1 195.3,457.3 197.4,457.5 199.6,457.7 201.7,457.9 203.9,458.1 206.0,458.3 208.1,458.5 210.3,458.6 212.4,458.8 214.6,459.0 216.7,459.1 218.8,459.3 221.0,459.4 223.1,459.6 225.2,459.7 227.4,459.8 229.5,460.0 231.7,460.1 233.8,460.2 235.9,460.3 238.1,460.4 240.2,460.5 242.4,460.6 244.5,460.7 246.6,460.8 248.8,460.8 250.9,460.9 253.1,461.0 255.2,461.0 257.3,461.1 259.5,461.1 261.6,461.2 263.7,461.2 265.9,461.3 268.0,461.3 270.2,461.3 272.3,461.3 274.4,461.3 276.6,461.3 278.7,461.4 280.9,461.3 283.0,461.3 285.1,461.3 287.3,461.3 289.4,461.3 291.5,461.2 293.7,461.2 295.8,461.2 298.0,461.1 300.1,461.1 302.2,461.0 304.4,460.9 306.5,460.9 308.7,460.8 310.8,460.7 312.9,460.6 315.1,460.5 317.2,460.4 319.4,460.3 321.5,460.2 323.6,460.1 325.8,460.0 327.9,459.9 330.0,459.7 332.2,459.6 334.3,459.5 336.5,459.3 338.6,459.2 340.7,459.0 342.9,458.8 345.0,458.7 347.2,458.5 349.3,458.3 351.4,458.1 353.6,457.9 355.7,457.8 357.8,457.5 360.0,457.3 362.1,457.1 364.3,456.9 366.4,456.7 368.5,456.5 370.7,456.2 372.8,456.0 375.0,455.7 377.1,455.5 379.2,455.2 381.4,455.0 383.5,454.7 385.7,454.4 387.8,454.2 389.9,453.9 392.1,453.6 394.2,453.3 396.3,453.0 398.5,452.7 400.6,452.4 402.8,452.1 404.9,451.8 407.0,451.4 409.2,451.1 411.3,450.8 413.5,450.4 415.6,450.1 417.7,449.7 419.9,449.4 422.0,449.0 424.1,448.6 426.3,448.3 428.4,447.9 430.6,447.5 432.7,447.1 434.8,446.7 437.0,446.3 439.1,445.9 441.3,445.5 443.4,445.1 445.5,444.6 447.7,444.2 449.8,443.8 451.9,443.3 454.1,442.9 456.2,442.4 458.4,442.0 460.5,441.5 462.6,441.0 464.8,440.6 466.9,440.1 469.1,439.6 471.2,439.1 473.3,438.6 475.5,438.1 477.6,437.6 479.8,437.1 481.9,436.6 484.0,436.1 486.2,435.5 488.3,435.0 490.4,434.5 492.6,433.9 494.7,433.4 496.9,432.8 499.0,432.3 501.1,431.7 503.3,431.1 505.4,430.6 507.6,430.0 509.7,429.4 511.8,428.8 514.0,428.2 516.1,427.6 518.2,427.0 520.4,426.4 522.5,425.7 524.7,425.1 526.8,424.5 528.9,423.9 531.1,423.2 533.2,422.6 535.4,421.9 537.5,421.3 539.6,420.6 541.8,419.9 543.9,419.2 546.1,418.6 548.2,417.9 550.3,417.2 552.5,416.5 554.6,415.8 556.7,415.1 558.9,414.4 561.0,413.7 563.2,412.9 565.3,412.2 567.4,411.5 569.6,410.7 571.7,410.0 573.9,409.2 576.0,408.5 578.1,407.7 580.3,407.0 582.4,406.2 584.5,405.4 586.7,404.6 588.8,403.8 591.0,403.0 593.1,402.2 595.2,401.4 597.4,400.6 599.5,399.8 601.7,399.0 603.8,398.2" fill="none" stroke="#0072bd" stroke-width="1.3"/>
<path clip-path="url(#c2)" d="M294.3 456.1L302.7 464.5M294.3 464.5L302.7 456.1M295.4 456.8L303.8 465.2M295.4 465.2L303.8 456.8M296.4 457.3L304.8 465.7M296.4 465.7L304.8 457.3M297.5 457.4L305.9 465.8M297.5 465.8L305.9 457.4M298.6 455.1L307.0 463.5M298.6 463.5L307.0 455.1M299.6 456.3L308.0 464.7M299.6 464.7L308.0 456.3M300.7 456.8L309.1 465.2M300.7 465.2L309.1 456.8M301.8 457.2L310.2 465.6M301.8 465.6L310.2 457.2M302.8 458.0L311.2 466.4M302.8 466.4L311.2 458.0M303.9 457.0L312.3 465.4M303.9 465.4L312.3 457.0M305.0 456.1L313.4 464.5M305.0 464.5L313.4 456.1M306.0 457.4L314.4 465.8M306.0 465.8L314.4 457.4M307.1 457.2L315.5 465.6M307.1 465.6L315.5 457.2M308.2 457.3L316.6 465.7M308.2 465.7L316.6 457.3M309.3 457.0L317.7 465.4M309.3 465.4L317.7 457.0M310.3 458.7L318.7 467.1M310.3 467.1L318.7 458.7M311.4 457.4L319.8 465.8M311.4 465.8L319.8 457.4M312.5 458.0L320.9 466.4M312.5 466.4L320.9 458.0M313.5 456.2L321.9 464.6M313.5 464.6L321.9 456.2M314.6 457.9L323.0 466.3M314.6 466.3L323.0 457.9M315.7 456.5L324.1 464.9M315.7 464.9L324.1 456.5M316.7 455.5L325.1 463.9M316.7 463.9L325.1 455.5M317.8 457.3L326.2 465.7M317.8 465.7L326.2 457.3M318.9 457.5L327.3 465.9M318.9 465.9L327.3 457.5M319.9 456.6L328.3 465.0M319.9 465.0L328.3 456.6M321.0 456.6L329.4 465.0M321.0 465.0L329.4 456.6M322.1 457.5L330.5 465.9M322.1 465.9L330.5 457.5M323.1 455.9L331.5 464.3M323.1 464.3L331.5 455.9M324.2 454.2L332.6 462.6M324.2 462.6L332.6 454.2M325.3 456.3L333.7 464.7M325.3 464.7L333.7 456.3M326.3 456.1L334.7 464.5M326.3 464.5L334.7 456.1M327.4 456.8L335.8 465.2M327.4 465.2L335.8 456.8M328.5 455.3L336.9 463.7M328.5 463.7L336.9 455.3M329.5 456.8L337.9 465.2M329.5 465.2L337.9 456.8M330.6 456.5L339.0 464.9M330.6 464.9L339.0 456.5M331.7 453.9L340.1 462.3M331.7 462.3L340.1 453.9M332.7 456.0L341.1 464.4M332.7 464.4L341.1 456.0M333.8 453.8L342.2 462.2M333.8 462.2L342.2 453.8M334.9 453.2L343.3 461.6M334.9 461.6L343.3 453.2M336.0 454.3L344.4 462.7M336.0 462.7L344.4 454.3M337.0 453.9L345.4 462.3M337.0 462.3L345.4 453.9M338.1 452.3L346.5 460.7M338.1 460.7L346.5 452.3M339.2 454.4L347.6 462.8M339.2 462.8L347.6 454.4M340.2 454.7L348.6 463.1M340.2 463.1L348.6 454.7M341.3 455.3L349.7 463.7M341.3 463.7L349.7 455.3M342.4 453.8L350.8 462.2M342.4 462.2L350.8 453.8M343.4 452.2L351.8 460.6M343.4 460.6L351.8 452.2M344.5 452.6L352.9 461.0M344.5 461.0L352.9 452.6M345.6 454.5L354.0 462.9M345.6 462.9L354.0 454.5M346.6 454.3L355.0 462.7M346.6 462.7L355.0 454.3M347.7 453.8L356.1 462.2M347.7 462.2L356.1 453.8M348.8 452.9L357.2 461.3M348.8 461.3L357.2 452.9M349.8 453.3L358.2 461.7M349.8 461.7L358.2 453.3M350.9 452.7L359.3 461.1M350.9 461.1L359.3 452.7M352.0 452.5L360.4 460.9M352.0 460.9L360.4 452.5M353.0 453.0L361.4 461.4M353.0 461.4L361.4 453.0M354.1 452.6L362.5 461.0M354.1 461.0L362.5 452.6M355.2 452.3L363.6 460.7M355.2 460.7L363.6 452.3M356.2 452.5L364.6 460.9M356.2 460.9L364.6 452.5M357.3 451.7L365.7 460.1M357.3 460.1L365.7 451.7M358.4 450.2L366.8 458.6M358.4 458.6L366.8 450.2M359.4 451.4L367.8 459.8M359.4 459.8L367.8 451.4M360.5 451.9L368.9 460.3M360.5 460.3L368.9 451.9M361.6 453.5L370.0 461.9M361.6 461.9L370.0 453.5M362.7 451.3L371.1 459.7M362.7 459.7L371.1 451.3M363.7 453.6L372.1 462.0M363.7 462.0L372.1 453.6M364.8 452.9L373.2 461.3M364.8 461.3L373.2 452.9M365.9 450.5L374.3 458.9M365.9 458.9L374.3 450.5M366.9 450.5L375.3 458.9M366.9 458.9L375.3 450.5M368.0 451.3L376.4 459.7M368.0 459.7L376.4 451.3M369.1 452.8L377.5 461.2M369.1 461.2L377.5 452.8M370.1 451.3L378.5 459.7M370.1 459.7L378.5 451.3M371.2 451.5L379.6 459.9M371.2 459.9L379.6 451.5M372.3 450.0L380.7 458.4M372.3 458.4L380.7 450.0M373.3 448.3L381.7 456.7M373.3 456.7L381.7 448.3M374.4 450.2L382.8 458.6M374.4 458.6L382.8 450.2M375.5 451.1L383.9 459.5M375.5 459.5L383.9 451.1M376.5 451.4L384.9 459.8M376.5 459.8L384.9 451.4M377.6 450.2L386.0 458.6M377.6 458.6L386.0 450.2M378.7 450.2L387.1 458.6M378.7 458.6L387.1 450.2M379.7 451.0L388.1 459.4M379.7 459.4L388.1 451.0M380.8 449.6L389.2 458.0M380.8 458.0L389.2 449.6M381.9 450.8L390.3 459.2M381.9 459.2L390.3 450.8M382.9 448.3L391.3 456.7M382.9 456.7L391.3 448.3M384.0 448.2L392.4 456.6M384.0 456.6L392.4 448.2M385.1 448.1L393.5 456.5M385.1 456.5L393.5 448.1M386.1 449.5L394.5 457.9M386.1 457.9L394.5 449.5M387.2 448.3L395.6 456.7M387.2 456.7L395.6 448.3M388.3 448.8L396.7 457.2M388.3 457.2L396.7 448.8M389.4 448.9L397.8 457.3M389.4 457.3L397.8 448.9M390.4 448.6L398.8 457.0M390.4 457.0L398.8 448.6M391.5 449.4L399.9 457.8M391.5 457.8L399.9 449.4M392.6 449.4L401.0 457.8M392.6 457.8L401.0 449.4M393.6 446.9L402.0 455.3M393.6 455.3L402.0 446.9M394.7 447.8L403.1 456.2M394.7 456.2L403.1 447.8M395.8 447.2L404.2 455.6M395.8 455.6L404.2 447.2M396.8 446.2L405.2 454.6M396.8 454.6L405.2 446.2M397.9 448.8L406.3 457.2M397.9 457.2L406.3 448.8M399.0 447.6L407.4 456.0M399.0 456.0L407.4 447.6M400.0 446.5L408.4 454.9M400.0 454.9L408.4 446.5M401.1 446.1L409.5 454.5M401.1 454.5L409.5 446.1M402.2 446.7L410.6 455.1M402.2 455.1L410.6 446.7M403.2 445.1L411.6 453.5M403.2 453.5L411.6 445.1M404.3 445.7L412.7 454.1M404.3 454.1L412.7 445.7M405.4 447.0L413.8 455.4M405.4 455.4L413.8 447.0M406.4 446.5L414.8 454.9M406.4 454.9L414.8 446.5M407.5 444.6L415.9 453.0M407.5 453.0L415.9 444.6M408.6 444.7L417.0 453.1M408.6 453.1L417.0 444.7M409.6 447.0L418.0 455.4M409.6 455.4L418.0 447.0M410.7 443.5L419.1 451.9M410.7 451.9L419.1 443.5M411.8 444.0L420.2 452.4M411.8 452.4L420.2 444.0M412.8 443.1L421.2 451.5M412.8 451.5L421.2 443.1M413.9 444.7L422.3 453.1M413.9 453.1L422.3 444.7M415.0 444.4L423.4 452.8M415.0 452.8L423.4 444.4M416.1 445.1L424.5 453.5M416.1 453.5L424.5 445.1M417.1 441.1L425.5 449.5M417.1 449.5L425.5 441.1M418.2 443.7L426.6 452.1M418.2 452.1L426.6 443.7M419.3 441.8L427.7 450.2M419.3 450.2L427.7 441.8M420.3 443.9L428.7 452.3M420.3 452.3L428.7 443.9M421.4 442.8L429.8 451.2M421.4 451.2L429.8 442.8M422.5 444.5L430.9 452.9M422.5 452.9L430.9 444.5M423.5 443.0L431.9 451.4M423.5 451.4L431.9 443.0M424.6 441.4L433.0 449.8M424.6 449.8L433.0 441.4M425.7 443.5L434.1 451.9M425.7 451.9L434.1 443.5M426.7 441.0L435.1 449.4M426.7 449.4L435.1 441.0M427.8 441.5L436.2 449.9M427.8 449.9L436.2 441.5M428.9 442.7L437.3 451.1M428.9 451.1L437.3 442.7M429.9 442.0L438.3 450.4M429.9 450.4L438.3 442.0M431.0 441.7L439.4 450.1M431.0 450.1L439.4 441.7M432.1 441.1L440.5 449.5M432.1 449.5L440.5 441.1M433.1 441.4L441.5 449.8M433.1 449.8L441.5 441.4M434.2 441.4L442.6 449.8M434.2 449.8L442.6 441.4M435.3 440.7L443.7 449.1M435.3 449.1L443.7 440.7M436.3 441.2L444.7 449.6M436.3 449.6L444.7 441.2M437.4 441.3L445.8 449.7M437.4 449.7L445.8 441.3M438.5 439.8L446.9 448.2M438.5 448.2L446.9 439.8M439.5 438.6L447.9 447.0M439.5 447.0L447.9 438.6M440.6 440.8L449.0 449.2M440.6 449.2L449.0 440.8M441.7 439.1L450.1 447.5M441.7 447.5L450.1 439.1M442.8 439.5L451.2 447.9M442.8 447.9L451.2 439.5M443.8 439.6L452.2 448.0M443.8 448.0L452.2 439.6M444.9 437.5L453.3 445.9M444.9 445.9L453.3 437.5M446.0 438.7L454.4 447.1M446.0 447.1L454.4 438.7M447.0 436.4L455.4 444.8M447.0 444.8L455.4 436.4M448.1 438.5L456.5 446.9M448.1 446.9L456.5 438.5M449.2 437.1L457.6 445.5M449.2 445.5L457.6 437.1M450.2 437.5L458.6 445.9M450.2 445.9L458.6 437.5M451.3 437.9L459.7 446.3M451.3 446.3L459.7 437.9M452.4 436.3L460.8 444.7M452.4 444.7L460.8 436.3M453.4 436.8L461.8 445.2M453.4 445.2L461.8 436.8M454.5 435.8L462.9 444.2M454.5 444.2L462.9 435.8M455.6 436.3L464.0 444.7M455.6 444.7L464.0 436.3M456.6 437.1L465.0 445.5M456.6 445.5L465.0 437.1M457.7 435.9L466.1 444.3M457.7 444.3L466.1 435.9M458.8 435.5L467.2 443.9M458.8 443.9L467.2 435.5M459.8 434.3L468.2 442.7M459.8 442.7L468.2 434.3M460.9 436.0L469.3 444.4M460.9 444.4L469.3 436.0M462.0 434.9L470.4 443.3M462.0 443.3L470.4 434.9M463.0 436.4L471.4 444.8M463.0 444.8L471.4 436.4M464.1 433.8L472.5 442.2M464.1 442.2L472.5 433.8M465.2 435.3L473.6 443.7M465.2 443.7L473.6 435.3M466.2 435.9L474.6 444.3M466.2 444.3L474.6 435.9M467.3 433.8L475.7 442.2M467.3 442.2L475.7 433.8M468.4 432.4L476.8 440.8M468.4 440.8L476.8 432.4M469.5 434.9L477.9 443.3M469.5 443.3L477.9 434.9M470.5 434.3L478.9 442.7M470.5 442.7L478.9 434.3M471.6 433.7L480.0 442.1M471.6 442.1L480.0 433.7M472.7 433.9L481.1 442.3M472.7 442.3L481.1 433.9M473.7 432.1L482.1 440.5M473.7 440.5L482.1 432.1M474.8 433.1L483.2 441.5M474.8 441.5L483.2 433.1M475.9 432.8L484.3 441.2M475.9 441.2L484.3 432.8M476.9 431.3L485.3 439.7M476.9 439.7L485.3 431.3M478.0 432.5L486.4 440.9M478.0 440.9L486.4 432.5M479.1 431.0L487.5 439.4M479.1 439.4L487.5 431.0M480.1 432.3L488.5 440.7M480.1 440.7L488.5 432.3M481.2 432.3L489.6 440.7M481.2 440.7L489.6 432.3M482.3 432.7L490.7 441.1M482.3 441.1L490.7 432.7M483.3 428.8L491.7 437.2M483.3 437.2L491.7 428.8M484.4 430.8L492.8 439.2M484.4 439.2L492.8 430.8M485.5 430.0L493.9 438.4M485.5 438.4L493.9 430.0M486.5 430.1L494.9 438.5M486.5 438.5L494.9 430.1M487.6 429.7L496.0 438.1M487.6 438.1L496.0 429.7M488.7 429.6L497.1 438.0M488.7 438.0L497.1 429.6M489.7 427.5L498.1 435.9M489.7 435.9L498.1 427.5M490.8 430.3L499.2 438.7M490.8 438.7L499.2 430.3M491.9 430.6L500.3 439.0M491.9 439.0L500.3 430.6M492.9 429.9L501.3 438.3M492.9 438.3L501.3 429.9M494.0 430.0L502.4 438.4M494.0 438.4L502.4 430.0M495.1 427.7L503.5 436.1M495.1 436.1L503.5 427.7M496.2 427.4L504.6 435.8M496.2 435.8L504.6 427.4M497.2 429.0L505.6 437.4M497.2 437.4L505.6 429.0M498.3 429.3L506.7 437.7M498.3 437.7L506.7 429.3M499.4 428.0L507.8 436.4M499.4 436.4L507.8 428.0M500.4 426.0L508.8 434.4M500.4 434.4L508.8 426.0M501.5 430.1L509.9 438.5M501.5 438.5L509.9 430.1M502.6 426.5L511.0 434.9M502.6 434.9L511.0 426.5M503.6 427.9L512.0 436.3M503.6 436.3L512.0 427.9M504.7 425.6L513.1 434.0M504.7 434.0L513.1 425.6M505.8 427.6L514.2 436.0M505.8 436.0L514.2 427.6M506.8 426.7L515.2 435.1M506.8 435.1L515.2 426.7M507.9 427.8L516.3 436.2M507.9 436.2L516.3 427.8M509.0 427.2L517.4 435.6M509.0 435.6L517.4 427.2M510.0 424.7L518.4 433.1M510.0 433.1L518.4 424.7M511.1 425.2L519.5 433.6M511.1 433.6L519.5 425.2" stroke="#ff0000" stroke-width="1.6" fill="none"/>
<rect x="86.5" y="195.7" width="638.1" height="94.5" fill="none" stroke="#262626" stroke-width="1.5"/>
<rect x="86.3" y="398.5" width="638.3" height="95.2" fill="none" stroke="#262626" stroke-width="1.5"/>
<path d="M214.1 290.2V285.2M214.1 195.7V200.7M341.7 290.2V285.2M341.7 195.7V200.7M469.4 290.2V285.2M469.4 195.7V200.7M597.0 290.2V285.2M597.0 195.7V200.7M86.5 242.9H91.5M724.6 242.9H719.6M120.5 493.7V488.7M120.5 398.5V403.5M209.5 493.7V488.7M209.5 398.5V403.5M298.5 493.7V488.7M298.5 398.5V403.5M387.5 493.7V488.7M387.5 398.5V403.5M476.5 493.7V488.7M476.5 398.5V403.5M565.5 493.7V488.7M565.5 398.5V403.5M654.5 493.7V488.7M654.5 398.5V403.5M86.3 406.3H91.3M724.6 406.3H719.6M86.3 426.8H91.3M724.6 426.8H719.6M86.3 447.2H91.3M724.6 447.2H719.6M86.3 467.6H91.3M724.6 467.6H719.6M86.3 488.0H91.3M724.6 488.0H719.6" stroke="#262626" stroke-width="1.2"/>
</svg>
<div class="tk" style="left:46.5px;top:298.5px;width:80px;text-align:center;font-size:13px">0</div>
<div class="tk" style="left:174.1px;top:298.5px;width:80px;text-align:center;font-size:13px">0.5</div>
<div class="tk" style="left:301.7px;top:298.5px;width:80px;text-align:center;font-size:13px">1</div>
<div class="tk" style="left:429.4px;top:298.5px;width:80px;text-align:center;font-size:13px">1.5</div>
<div class="tk" style="left:557.0px;top:298.5px;width:80px;text-align:center;font-size:13px">2</div>
<div class="tk" style="left:684.6px;top:298.5px;width:80px;text-align:center;font-size:13px">2.5</div>
<div class="tk" style="left:0.0px;top:283.7px;width:80px;text-align:right;font-size:13px">0</div>
<div class="tk" style="left:0.0px;top:236.4px;width:80px;text-align:right;font-size:13px">0.5</div>
<div class="tk" style="left:0.0px;top:189.2px;width:80px;text-align:right;font-size:13px">1</div>
<div class="tk" style="left:80.5px;top:502.0px;width:80px;text-align:center;font-size:13px">-2</div>
<div class="tk" style="left:169.5px;top:502.0px;width:80px;text-align:center;font-size:13px">-1</div>
<div class="tk" style="left:258.5px;top:502.0px;width:80px;text-align:center;font-size:13px">0</div>
<div class="tk" style="left:347.5px;top:502.0px;width:80px;text-align:center;font-size:13px">1</div>
<div class="tk" style="left:436.5px;top:502.0px;width:80px;text-align:center;font-size:13px">2</div>
<div class="tk" style="left:525.5px;top:502.0px;width:80px;text-align:center;font-size:13px">3</div>
<div class="tk" style="left:614.5px;top:502.0px;width:80px;text-align:center;font-size:13px">4</div>
<div class="tk" style="left:0.0px;top:399.8px;width:80px;text-align:right;font-size:13px">15</div>
<div class="tk" style="left:0.0px;top:420.2px;width:80px;text-align:right;font-size:13px">10</div>
<div class="tk" style="left:0.0px;top:440.7px;width:80px;text-align:right;font-size:13px">5</div>
<div class="tk" style="left:0.0px;top:461.1px;width:80px;text-align:right;font-size:13px">0</div>
<div class="tk" style="left:0.0px;top:481.5px;width:80px;text-align:right;font-size:13px">-5</div>
<div class="tk" style="left:87.0px;top:182.0px;font-size:15px;color:#666;font-weight:100">&#215;</div><div class="tk" style="left:97.5px;top:182.5px;font-size:12.5px">10</div><div class="tk" style="left:111.5px;top:178.0px;font-size:10px">-6</div>
<div class="tk" style="left:690.0px;top:321.0px;font-size:15px;color:#666;font-weight:100">&#215;</div><div class="tk" style="left:700.5px;top:321.5px;font-size:12.5px">10</div><div class="tk" style="left:714.5px;top:317.0px;font-size:10px">-3</div>
<div class="tk" style="left:87.0px;top:384.5px;font-size:15px;color:#666;font-weight:100">&#215;</div><div class="tk" style="left:97.5px;top:385.0px;font-size:12.5px">10</div><div class="tk" style="left:111.5px;top:380.5px;font-size:10px">-7</div>
<div class="tk" style="left:690.0px;top:525.0px;font-size:15px;color:#666;font-weight:100">&#215;</div><div class="tk" style="left:700.5px;top:525.5px;font-size:12.5px">10</div><div class="tk" style="left:714.5px;top:521.0px;font-size:10px">-3</div>
<div class="t" style="left:205px;top:176.3px;width:400px;text-align:center;font-size:15.2px;font-weight:bold;color:#000">Line scan</div>
<div class="t" style="left:205px;top:338.5px;width:400px;text-align:center;font-size:15.2px;font-weight:bold;color:#000">Fitting</div>
<div class="t" style="left:205px;top:358.8px;width:400px;text-align:center;font-size:15.2px;font-weight:bold;color:#000">Radius of curvature = 4.3911m</div>
<div class="t" style="left:205px;top:378.5px;width:400px;text-align:center;font-size:15.2px;font-weight:bold;color:#000">Fitting Score = 0.049982</div>
<svg class="a" style="left:0;top:0" width="1669" height="240" viewBox="0 0 1669 240">
<defs>
<linearGradient id="gcb" x1="0" y1="0" x2="0" y2="1"><stop offset="0" stop-color="#8a7ee8"/><stop offset="0.4" stop-color="#80e0f0"/><stop offset="0.75" stop-color="#f0f080"/><stop offset="1" stop-color="#f8a060"/></linearGradient>
<linearGradient id="gfl" x1="0" y1="0" x2="0" y2="1"><stop offset="0" stop-color="#fff4b0"/><stop offset="1" stop-color="#e8b830"/></linearGradient>
<linearGradient id="gfp" x1="0" y1="0" x2="1" y2="1"><stop offset="0" stop-color="#6a6ae8"/><stop offset="1" stop-color="#2a2a90"/></linearGradient>
<g id="tbar">
<!-- folder -->
<path d="M5.5 100.5 L10 100.5 L11.5 102 L18 102 L18 110 L5.5 110Z" fill="url(#gfl)" stroke="#b08010" stroke-width="1"/>
<path d="M7 104 L20 104 L18 110 L5.5 110Z" fill="#f8d860" stroke="#b08010" stroke-width="0.8"/>
<path d="M12.5 98 Q15.5 95 18.5 97.5" stroke="#3a70b8" stroke-width="1.3" fill="none"/><path d="M17.5 95.8 L19.8 98.5 L16.5 98.8Z" fill="#3a70b8"/>
<!-- floppy -->
<rect x="29" y="96" width="14.5" height="14.5" fill="url(#gfp)" stroke="#2a2a70" stroke-width="0.8"/>
<rect x="31.5" y="96.5" width="9.5" height="6" fill="#f0f4ff"/>
<rect x="33" y="105.5" width="6.5" height="4.5" fill="#fff"/><rect x="33.5" y="106.5" width="2" height="3" fill="#222"/>
<!-- printer -->
<path d="M55 95.5 L62 95.5 L63.5 101 L54 101Z" fill="#b8d8f8" stroke="#7a9ab8" stroke-width="0.6"/>
<path d="M52 102 L66 102 L66.5 109 L52 109Z" fill="#c8c8c8" stroke="#707070" stroke-width="0.9"/>
<rect x="53.5" y="104.5" width="11" height="2.5" fill="#888"/>
<!-- separators -->
<path d="M74.5 94.5V114.5 M105.5 94.5V114.5 M263.5 94.5V114.5 M294.5 94.5V114.5 M348.5 94.5V114.5" stroke="#9a9a9a" stroke-width="1"/>
<!-- arrow pointer -->
<path d="M87 96.5 L87 109 L89.8 106.3 L92 110.8 L94 109.8 L91.8 105.5 L95.5 105.3Z" fill="#fff" stroke="#000" stroke-width="1.1" stroke-linejoin="miter"/>
<!-- zoom in -->
<circle cx="118.5" cy="100.5" r="5" fill="#d8f0f8" stroke="#7080c0" stroke-width="1.2"/>
<path d="M122 104 L128 110" stroke="#d88a20" stroke-width="2.6"/>
<path d="M115.8 100.5 H121.2 M118.5 97.8 V103.2" stroke="#203880" stroke-width="1.4"/>
<!-- zoom out -->
<circle cx="141.7" cy="100.3" r="5" fill="#d8f0f8" stroke="#7080c0" stroke-width="1.2"/>
<path d="M145.2 103.8 L151.2 109.8" stroke="#d88a20" stroke-width="2.6"/>
<path d="M139 100.3 H144.4" stroke="#203880" stroke-width="1.4"/>
<!-- hand -->
<path d="M161 106 L159.5 101.5 Q159.5 100 161 100.8 L163 103 L162.5 97.5 Q163 96 164.5 97 L165.5 101 L165.8 96 Q166.8 94.8 168 96 L168.5 101 L169.5 96.8 Q170.8 96 171.5 97.3 L171.5 101.5 L172.8 99.5 Q174.5 99.5 174.3 101 L173.5 106 Q172 110.8 167 110.8 Q163 110.8 161 106Z" fill="#f8dcc0" stroke="#2a50d0" stroke-width="0.9"/>
<!-- rotate -->
<path d="M184.5 98.5 A7 7 0 1 0 190.5 96" stroke="#2a4a8a" stroke-width="2.2" fill="none"/>
<path d="M182.5 95.5 L187.5 96 L183.5 100.5Z" fill="#2a4a8a"/>
<path d="M188 100 L191 99 L193.5 100 L193.5 104 L190.5 105.5 L188 104.2Z" fill="#d8e0f0" stroke="#2a4a8a" stroke-width="0.9"/>
<!-- data cursor -->
<rect x="210.5" y="95.5" width="9.5" height="9" fill="#fffcc0" stroke="#a0a040" stroke-width="1"/>
<path d="M212.5 98H218M212.5 100H218M212.5 102H218" stroke="#b0b060" stroke-width="0.8"/>
<path d="M205 98 L208 104 M213 108 L219 110" stroke="#2020e0" stroke-width="0.9" stroke-dasharray="1.5 1"/>
<path d="M206.5 106.3 H213 M209.8 103 V109.5" stroke="#000" stroke-width="1.8"/>
<!-- brush -->
<path d="M244.5 96 L236 104.5" stroke="#3050c0" stroke-width="2.6" stroke-linecap="round"/>
<path d="M244 96.5 L236.5 104" stroke="#e0e8ff" stroke-width="0.9"/>
<path d="M236.5 103.5 Q231 105 230.5 110 Q235 110.5 238 105.5Z" fill="#404040"/>
<rect x="239" y="105.2" width="5" height="4.5" fill="#f00000"/>
<path d="M252.3 101.8 H257 L254.65 105Z" fill="#222"/>
<!-- link -->
<rect x="273" y="95.5" width="11" height="8" fill="#f0f4fa" stroke="#2a4a8a" stroke-width="1.1"/>
<rect x="271" y="98" width="11" height="8.5" fill="#e8ecf4" stroke="#2a4a8a" stroke-width="1.1"/>
<path d="M271 98 H282" stroke="#2a4a8a" stroke-width="2"/>
<rect x="272.5" y="105" width="7" height="4.5" rx="2.2" fill="none" stroke="#607090" stroke-width="1.4"/>
<rect x="278" y="105" width="7" height="4.5" rx="2.2" fill="none" stroke="#607090" stroke-width="1.4"/>
<!-- colorbar -->
<rect x="305.5" y="96" width="9.5" height="13.5" fill="url(#gcb)" stroke="#2a3a7a" stroke-width="1.1"/>
<!-- legend -->
<rect x="325.5" y="96" width="14" height="13.5" fill="#f0f4fa" stroke="#2a3a7a" stroke-width="1.1"/>
<rect x="327" y="98" width="5" height="3.5" fill="#e05050"/><rect x="327" y="104" width="5" height="3.5" fill="#5050e0"/>
<path d="M334 99.5H338M334 105.8H338" stroke="#000" stroke-width="1.2"/>
<!-- hide plot tools -->
<rect x="359.5" y="98.5" width="10" height="10" fill="#8a8a8a" stroke="#a0a0a0" stroke-width="1"/>
<!-- show plot tools -->
<rect x="379.5" y="96.5" width="14" height="13" fill="#fff" stroke="#2a3a7a" stroke-width="1.2"/>
<path d="M379.5 98 H393.5" stroke="#2a3a7a" stroke-width="1.6"/>
<path d="M381.5 99.5V108.5M391.5 99.5V108.5M381 108.5H392" stroke="#b0b8c8" stroke-width="1.4"/>
</g>
</defs>
<use href="#tbar"/>
<clipPath id="tbc"><rect x="811" y="0" width="900" height="240"/></clipPath><g clip-path="url(#tbc)"><use href="#tbar" transform="translate(798 110)"/></g>
</svg>

<!-- Slider window -->
<div class="a" style="left:15px;top:657px;width:672px;height:317px;background:#f7f8fa;border:1px solid #555;border-radius:6px;box-shadow:2px 3px 8px rgba(0,0,0,.35)"></div>
<div class="a" style="left:16px;top:658px;width:670px;height:28px;border-radius:6px 6px 0 0;background:linear-gradient(100deg,#fafafa 0%,#f6f6f6 20%,#ffffff 35%,#f0f0f0 45%,#fbfbfb 60%,#f5f5f5 100%)"></div>
<!-- matlab icon -->
<svg class="a" style="left:23px;top:664px" width="16" height="16" viewBox="0 0 16 16"><rect x="0.5" y="0.5" width="15" height="15" fill="#e8ecf2" stroke="#8a9098"/><rect x="1" y="1" width="14" height="2" fill="#9ab0d0"/><path d="M2 12 L6 9 L9 3 L11 8 L14 13 L9 11Z" fill="#e05a10"/><path d="M2 12 L6 9 L8 11Z" fill="#3070c0"/><path d="M9 3 L11 8 L14 13 L10 9Z" fill="#f0b020"/></svg>
<div class="t" style="left:44px;top:665.5px;font-size:12.3px;color:#000">Slider</div>
<div class="ctl" style="left:577px;top:657px;width:103px;height:19px;background:linear-gradient(#fdfdfd,#eef0f4)"></div>
<div class="a" style="left:605px;top:657px;width:1px;height:18px;background:#9a9a9a"></div>
<div class="a" style="left:632px;top:657px;width:1px;height:18px;background:#9a9a9a"></div>
<div class="a" style="left:585px;top:666px;width:12px;height:5px;border:1px solid #3c4660;border-radius:1px;background:#fff"></div>
<div class="a" style="left:613px;top:661px;width:12px;height:10px;border:1px solid #b8b8c0;background:#fff"><div class="a" style="left:2px;top:2px;width:6px;height:4px;border:1px solid #b8b8c0"></div></div>
<svg class="a" style="left:649px;top:660px" width="14" height="12" viewBox="0 0 14 12"><path d="M3 2 L11 10 M11 2 L3 10" stroke="#3c4660" stroke-width="4.6" stroke-linecap="square" fill="none"/><path d="M3 2 L11 10 M11 2 L3 10" stroke="#fff" stroke-width="2.4" stroke-linecap="square" fill="none"/></svg>
<div class="a" style="left:22px;top:686px;width:658px;height:281px;background:#f0f0f0;border:1px solid #8a8a8a"></div>
<div class="t" style="left:228px;top:706.5px;font-size:18.7px">move line</div>
<div class="t" style="left:337px;top:707px;font-size:16.1px">X: 764</div>
<div class="t" style="left:69px;top:715px;font-size:15.6px">Y</div>
<div class="t" style="left:579px;top:712px;font-size:14.7px">In Y verkürzen</div>
<!-- Y slider left -->
<div class="a" style="left:49px;top:737px;width:51px;height:150px;background:#e6e6e6;border-left:1px solid #777;border-right:2px solid #6a6a6a;border-bottom:2px solid #6a6a6a"></div>
<div class="ar" style="left:50px;top:737px;width:48px;height:13px"></div>
<div class="a" style="left:49px;top:750px;width:51px;height:2px;background:#6a6a6a"></div>
<div class="ar" style="left:50px;top:807px;width:48px;height:9px"></div>
<div class="a" style="left:49px;top:815px;width:51px;height:2px;background:#6a6a6a"></div>
<div class="ar" style="left:50px;top:872px;width:48px;height:13px"></div>
<div class="a" style="left:69px;top:741px;width:0;height:0;border-left:4px solid transparent;border-right:4px solid transparent;border-bottom:4px solid #606060"></div>
<div class="a" style="left:69px;top:877px;width:0;height:0;border-left:4px solid transparent;border-right:4px solid transparent;border-top:4px solid #606060"></div>
<!-- Y slider right -->
<div class="a" style="left:603px;top:737px;width:51px;height:150px;background:#e6e6e6;border-left:1px solid #777;border-right:2px solid #6a6a6a;border-bottom:2px solid #6a6a6a"></div>
<div class="ar" style="left:604px;top:737px;width:48px;height:13px"></div>
<div class="a" style="left:603px;top:750px;width:51px;height:2px;background:#6a6a6a"></div>
<div class="ar" style="left:604px;top:807px;width:48px;height:9px"></div>
<div class="a" style="left:603px;top:815px;width:51px;height:2px;background:#6a6a6a"></div>
<div class="ar" style="left:604px;top:872px;width:48px;height:13px"></div>
<div class="a" style="left:623px;top:741px;width:0;height:0;border-left:4px solid transparent;border-right:4px solid transparent;border-bottom:4px solid #606060"></div>
<div class="a" style="left:623px;top:877px;width:0;height:0;border-left:4px solid transparent;border-right:4px solid transparent;border-top:4px solid #606060"></div>
<!-- H slider -->
<div class="a" style="left:122px;top:738px;width:291px;height:48px;background:#e6e6e6;border-top:2px solid #6a6a6a;border-bottom:2px solid #6a6a6a;border-right:2px solid #6a6a6a"></div>
<div class="ar" style="left:122px;top:739px;width:15px;height:45px"></div>
<div class="a" style="left:136px;top:738px;width:2px;height:48px;background:#6a6a6a"></div>
<div class="ar" style="left:225px;top:739px;width:20px;height:45px"></div>
<div class="a" style="left:245px;top:738px;width:2px;height:48px;background:#6a6a6a"></div>
<div class="ar" style="left:397px;top:739px;width:14px;height:45px"></div>
<div class="a" style="left:127px;top:757px;width:0;height:0;border-top:4px solid transparent;border-bottom:4px solid transparent;border-right:4px solid #606060"></div>
<div class="a" style="left:403px;top:757px;width:0;height:0;border-top:4px solid transparent;border-bottom:4px solid transparent;border-left:4px solid #606060"></div>
<!-- buttons -->
<div class="btn" style="left:437px;top:737px;width:148px;height:48px;font-size:15.6px;line-height:1;padding-top:18.5px">Werte speichern</div>
<div class="t" style="left:137.5px;top:816px;font-size:16px">X1:</div>
<div class="t" style="left:286.5px;top:816px;font-size:16px">X2:</div>
<div class="btn" style="left:137px;top:837px;width:99px;height:49px;font-size:10.8px;line-height:1;padding-top:19px">Interval Grenze 1</div>
<div class="btn" style="left:287px;top:837px;width:99px;height:49px;font-size:10.8px;line-height:1;padding-top:19px">Interval Grenze 2</div>
<div class="btn" style="left:437px;top:837px;width:122px;height:49px;font-size:10.9px;line-height:1;padding-top:19px">Mittelwert berechnen</div>
<div class="t" style="left:437px;top:894px;font-size:15.6px">Mittelwert:</div>
<div class="btn" style="left:51px;top:914px;width:149px;height:49px;font-size:11px;line-height:1;padding-top:19px">Auto Linescan</div>

</body></html>
